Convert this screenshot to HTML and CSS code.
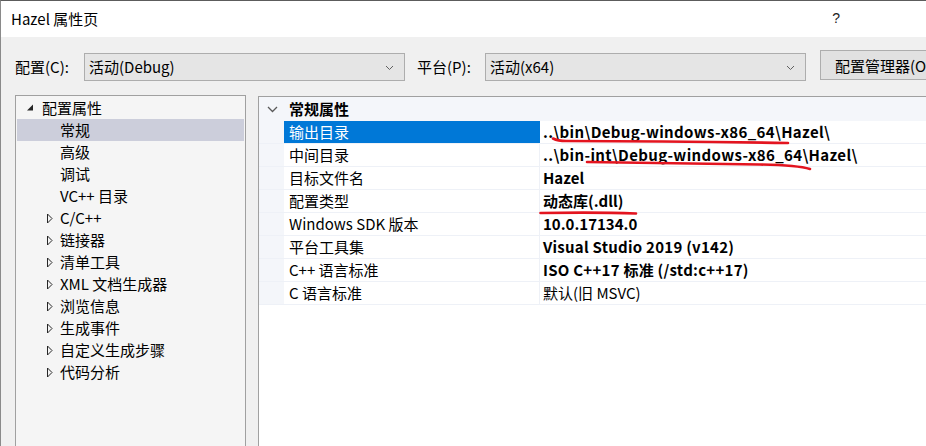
FILE: index.html
```html
<!DOCTYPE html>
<html lang="zh-CN">
<head>
<meta charset="utf-8">
<title>Hazel 属性页</title>
<link rel="stylesheet" href="styles.css">
</head>
<body>
<div class="window">
  <div class="titlebar">
    <span class="title">Hazel 属性页</span>
    <span class="help">?</span>
  </div>
  <div class="content">
    <div class="config-row">
      <label class="cfg-label lbl1">配置(C):</label>
      <div class="combo"><span>活动(Debug)</span>
        <svg class="chev" width="9" height="6" viewBox="0 0 9 6"><path d="M1 1 L4.5 4.5 L8 1" fill="none" stroke="#606060" stroke-width="1"/></svg>
      </div>
      <label class="cfg-label lbl2">平台(P):</label>
      <div class="combo"><span>活动(x64)</span>
        <svg class="chev" width="9" height="6" viewBox="0 0 9 6"><path d="M1 1 L4.5 4.5 L8 1" fill="none" stroke="#606060" stroke-width="1"/></svg>
      </div>
      <button class="btn">配置管理器(O)...</button>
    </div>
    <div class="panels">
      <div class="tree">
        <div class="node lvl0"><svg class="exp" width="9" height="9" viewBox="0 0 9 9"><path d="M7 1.5 L7 7.5 L1 7.5 Z" fill="#262626"/></svg><span>配置属性</span></div>
        <div class="node lvl1 selected"><span>常规</span></div>
        <div class="node lvl1"><span>高级</span></div>
        <div class="node lvl1"><span>调试</span></div>
        <div class="node lvl1"><span>VC++ 目录</span></div>
        <div class="node lvl1c"><svg class="col" width="8" height="11" viewBox="0 0 8 11"><path d="M1.5 1 L6 5.5 L1.5 10 Z" fill="none" stroke="#262626" stroke-width="1"/></svg><span>C/C++</span></div>
        <div class="node lvl1c"><svg class="col" width="8" height="11" viewBox="0 0 8 11"><path d="M1.5 1 L6 5.5 L1.5 10 Z" fill="none" stroke="#262626" stroke-width="1"/></svg><span>链接器</span></div>
        <div class="node lvl1c"><svg class="col" width="8" height="11" viewBox="0 0 8 11"><path d="M1.5 1 L6 5.5 L1.5 10 Z" fill="none" stroke="#262626" stroke-width="1"/></svg><span>清单工具</span></div>
        <div class="node lvl1c"><svg class="col" width="8" height="11" viewBox="0 0 8 11"><path d="M1.5 1 L6 5.5 L1.5 10 Z" fill="none" stroke="#262626" stroke-width="1"/></svg><span>XML 文档生成器</span></div>
        <div class="node lvl1c"><svg class="col" width="8" height="11" viewBox="0 0 8 11"><path d="M1.5 1 L6 5.5 L1.5 10 Z" fill="none" stroke="#262626" stroke-width="1"/></svg><span>浏览信息</span></div>
        <div class="node lvl1c"><svg class="col" width="8" height="11" viewBox="0 0 8 11"><path d="M1.5 1 L6 5.5 L1.5 10 Z" fill="none" stroke="#262626" stroke-width="1"/></svg><span>生成事件</span></div>
        <div class="node lvl1c"><svg class="col" width="8" height="11" viewBox="0 0 8 11"><path d="M1.5 1 L6 5.5 L1.5 10 Z" fill="none" stroke="#262626" stroke-width="1"/></svg><span>自定义生成步骤</span></div>
        <div class="node lvl1c"><svg class="col" width="8" height="11" viewBox="0 0 8 11"><path d="M1.5 1 L6 5.5 L1.5 10 Z" fill="none" stroke="#262626" stroke-width="1"/></svg><span>代码分析</span></div>
      </div>
      <div class="grid">
        <div class="grow header">
          <div class="gutter"><svg width="11" height="7" viewBox="0 0 11 7"><path d="M1 1 L5.5 5.5 L10 1" fill="none" stroke="#5a5a5a" stroke-width="1.3"/></svg></div>
          <div class="hname">常规属性</div>
        </div>
        <div class="grow">
          <div class="gutter"></div>
          <div class="name sel">输出目录</div>
          <div class="value b path">..\bin\Debug-windows-x86_64\Hazel\</div>
        </div>
        <div class="grow">
          <div class="gutter"></div>
          <div class="name">中间目录</div>
          <div class="value b path">..\bin-int\Debug-windows-x86_64\Hazel\</div>
        </div>
        <div class="grow">
          <div class="gutter"></div>
          <div class="name">目标文件名</div>
          <div class="value b">Hazel</div>
        </div>
        <div class="grow">
          <div class="gutter"></div>
          <div class="name">配置类型</div>
          <div class="value b">动态库(.dll)</div>
        </div>
        <div class="grow">
          <div class="gutter"></div>
          <div class="name">Windows SDK 版本</div>
          <div class="value b">10.0.17134.0</div>
        </div>
        <div class="grow">
          <div class="gutter"></div>
          <div class="name">平台工具集</div>
          <div class="value b wide">Visual Studio 2019 (v142)</div>
        </div>
        <div class="grow">
          <div class="gutter"></div>
          <div class="name">C++ 语言标准</div>
          <div class="value b wide">ISO C++17 标准 (/std:c++17)</div>
        </div>
        <div class="grow">
          <div class="gutter"></div>
          <div class="name">C 语言标准</div>
          <div class="value">默认(旧 MSVC)</div>
        </div>
      </div>
    </div>
  </div>
  <svg class="marks" width="926" height="446" viewBox="0 0 926 446">
    <path d="M553 138.5 C556 140, 560 141, 566 141 C620 141, 700 141.5, 788 143" fill="none" stroke="#e3141f" stroke-width="2.6" stroke-linecap="round"/>
    <path d="M587 162 C640 163, 700 163.5, 760 164.5 C785 165, 800 166, 810 169" fill="none" stroke="#e3141f" stroke-width="2.6" stroke-linecap="round"/>
    <path d="M540.5 213 C570 212.5, 610 212.5, 636 213.5" fill="none" stroke="#e3141f" stroke-width="2.6" stroke-linecap="round"/>
  </svg>
</div>
</body>
</html>
```
FILE: styles.css
```css
* { box-sizing: border-box; }
html, body {
  margin: 0;
  padding: 0;
  width: 926px;
  height: 446px;
  overflow: hidden;
  background: #f0f0f0;
}
body {
  font-family: "Noto Sans CJK SC", "Noto Sans", sans-serif;
  font-size: 15px;
  color: #000;
}
.window {
  position: relative;
  width: 926px;
  height: 446px;
  border-top: 1px solid #5c5c5c;
  border-left: 1px solid #8a8a8a;
  background: #f0f0f0;
  overflow: hidden;
}
.titlebar {
  height: 36px;
  background: #fff;
  display: flex;
  align-items: center;
  padding-left: 10px;
}
.title {
  font-size: 15px;
  line-height: 36px;
  margin-top: -1px;
  flex-shrink: 0;
}
.help {
  margin-left: 734px;
  font-size: 14px;
  font-family: "Liberation Sans", sans-serif;
  margin-top: -2px;
  color: #222;
}
.content {
  padding-left: 14px;
}
.config-row {
  display: flex;
  align-items: flex-start;
  height: 34px;
  margin-top: 13px;
  white-space: nowrap;
}
.cfg-label {
  height: 28px;
  margin-top: 3px;
  line-height: 28px;
  flex-shrink: 0;
}
.lbl1 { width: 69px; }
.lbl2 { width: 68px; margin-left: 12px; }
.combo {
  width: 321px;
  height: 28px;
  flex-shrink: 0;
  margin-top: 3px;
  background: #e5e5e5;
  border: 1px solid #adadad;
  display: flex;
  align-items: center;
  justify-content: space-between;
  padding: 0 10px 0 4px;
  line-height: 26px;
}
.chev { margin-top: 1px; }
.btn {
  margin-left: 14px;
  width: 140px;
  height: 30px;
  flex-shrink: 0;
  background: #e1e1e1;
  border: 1px solid #adadad;
  font-family: inherit;
  font-size: 15px;
  text-align: left;
  padding: 0 0 0 14px;
  color: #000;
  white-space: nowrap;
}
.panels {
  display: flex;
  align-items: flex-start;
  margin-top: 11px;
}
.tree {
  width: 231px;
  height: 400px;
  flex-shrink: 0;
  background: #f5f5f5;
  border: 1px solid #a0a0a0;
  padding: 1px 1px;
}
.node {
  height: 22px;
  line-height: 22px;
  display: flex;
  align-items: center;
  white-space: nowrap;
}
.node span { line-height: 22px; }
.lvl0 { padding-left: 9px; }
.lvl0 .exp { margin-right: 7px; margin-top: -2px; }
.lvl1 { padding-left: 43px; }
.lvl1c { padding-left: 29px; }
.lvl1c .col { margin-right: 6px; }
.selected { background: #cccedb; }
.grid {
  width: 700px;
  height: 400px;
  flex-shrink: 0;
  margin-left: 12px;
  margin-top: 1px;
  border: 1px solid #a0a0a0;
  background: #fff;
}
.grow {
  display: flex;
  height: 23px;
  border-bottom: 1px solid #eef1f7;
}
.grow.header {
  height: 24px;
  background: #f4f6fa;
  border-bottom: none;
}
.gutter {
  width: 25px;
  flex-shrink: 0;
  background: #f4f6fa;
  display: flex;
  align-items: center;
  justify-content: center;
  padding-left: 2px;
}
.header .gutter { padding-left: 1px; }
.hname {
  font-weight: bold;
  padding-left: 5px;
  line-height: 24px;
}
.name {
  width: 256px;
  flex-shrink: 0;
  padding-left: 5px;
  line-height: 22px;
  border-right: 1px solid #eef1f7;
  white-space: nowrap;
}
.name.sel {
  background: #0078d7;
  color: #fff;
  border-right-color: #0078d7;
}
.value {
  padding-left: 3px;
  line-height: 22px;
  white-space: nowrap;
}
.value.b { font-weight: bold; }
.value.path { letter-spacing: 0.35px; }
.value.wide { letter-spacing: 0.25px; }
.marks {
  position: absolute;
  left: -1px;
  top: -1px;
  pointer-events: none;
}
```
